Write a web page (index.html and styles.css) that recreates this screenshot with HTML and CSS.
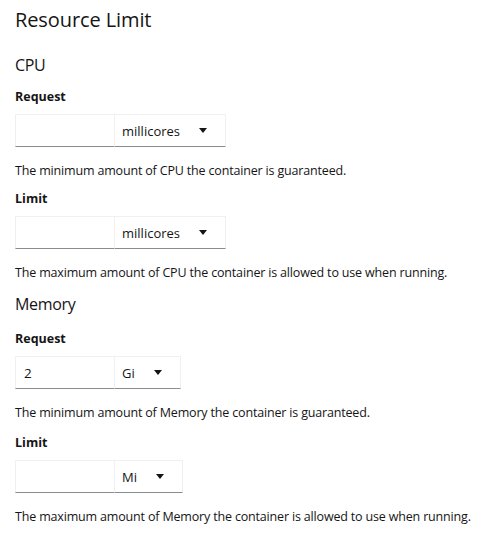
FILE: index.html
```html
<!DOCTYPE html>
<html>
<head>
<meta charset="utf-8">
<link rel="stylesheet" href="styles.css">
</head>
<body>
<div class="page">
  <h1 class="title">Resource Limit</h1>
  <section class="section">
    <h2 class="section-title">CPU</h2>
    <div class="field">
      <label class="label">Request</label>
      <div class="control">
        <input class="input" type="text" value="">
        <div class="select"><span>millicores</span><span class="caret"></span></div>
      </div>
      <p class="helper">The minimum amount of CPU the container is guaranteed.</p>
    </div>
    <div class="field">
      <label class="label">Limit</label>
      <div class="control">
        <input class="input" type="text" value="">
        <div class="select"><span>millicores</span><span class="caret"></span></div>
      </div>
      <p class="helper">The maximum amount of CPU the container is allowed to use when running.</p>
    </div>
  </section>
  <section class="section section-memory">
    <h2 class="section-title">Memory</h2>
    <div class="field">
      <label class="label">Request</label>
      <div class="control">
        <input class="input" type="text" value="2">
        <div class="select"><span>Gi</span><span class="caret"></span></div>
      </div>
      <p class="helper">The minimum amount of Memory the container is guaranteed.</p>
    </div>
    <div class="field">
      <label class="label">Limit</label>
      <div class="control">
        <input class="input" type="text" value="">
        <div class="select"><span>Mi</span><span class="caret"></span></div>
      </div>
      <p class="helper">The maximum amount of Memory the container is allowed to use when running.</p>
    </div>
  </section>
</div>
</body>
</html>
```
FILE: styles.css
```css
* { box-sizing: border-box; }
body {
  margin: 0;
  background: #fff;
  color: #151515;
  font-family: "Open Sans", "Noto Sans", sans-serif;
}
.page {
  padding: 6px 15px 0 15px;
}
.title {
  margin: 0;
  font-size: 20px;
  line-height: 28px;
  font-weight: 400;
  letter-spacing: -0.1px;
}
.section {
  display: flex;
  flex-direction: column;
}
.section-title {
  margin: 19px 0 10px;
  font-size: 16px;
  line-height: 24px;
  font-weight: 400;
  letter-spacing: -0.3px;
}
.section-memory .section-title {
  margin-top: 9px;
  margin-bottom: 13px;
}
.field + .field { margin-top: 8px; }
.section-memory .field + .field { margin-top: 10px; }
.label {
  display: block;
  font-size: 12.5px;
  line-height: 20px;
  font-weight: 700;
  margin-bottom: 7px;
}
.control {
  display: flex;
  height: 33px;
}
.input {
  width: 100px;
  height: 33px;
  margin: 0;
  padding: 0 8px;
  border: 1px solid #f0f0f0;
  border-bottom-color: #8a8d90;
  font-family: inherit;
  font-size: 13.5px;
  color: #151515;
  outline: none;
}
.select {
  display: flex;
  align-items: center;
  gap: 19px;
  height: 33px;
  padding: 0 18px 0 7px;
  border: 1px solid #f0f0f0;
  border-left: none;
  border-bottom-color: #8a8d90;
  font-size: 13px;
}
.caret {
  width: 0;
  height: 0;
  border-left: 4px solid transparent;
  border-right: 4px solid transparent;
  border-top: 5px solid #151515;
}
.helper {
  margin: 14px 0 0;
  font-size: 12.5px;
  line-height: 20px;
  letter-spacing: -0.17px;
}
```
